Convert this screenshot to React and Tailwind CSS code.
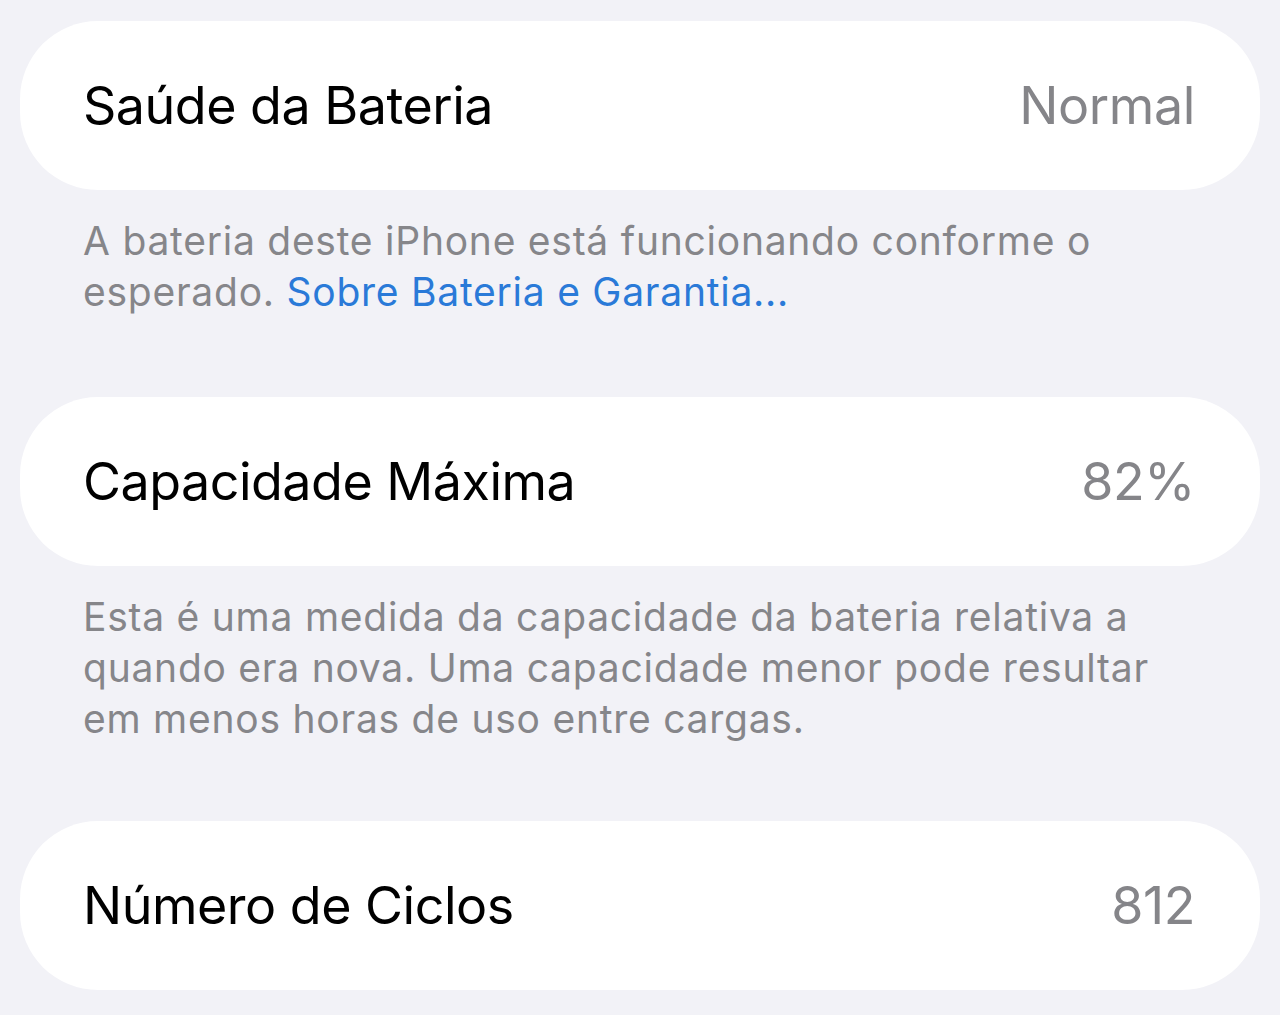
import React from 'react';

const rows = [
  {
    label: 'Saúde da Bateria',
    value: 'Normal',
    note: (
      <>
        A bateria deste iPhone está funcionando conforme o esperado.{' '}
        <span className="text-[#2a7ad8]">Sobre Bateria e Garantia...</span>
      </>
    ),
  },
  {
    label: 'Capacidade Máxima',
    value: '82%',
    note: 'Esta é uma medida da capacidade da bateria relativa a quando era nova. Uma capacidade menor pode resultar em menos horas de uso entre cargas.',
  },
  { label: 'Número de Ciclos', value: '812' },
];

const Row = ({ label, value }) => (
  <div className="flex h-[169px] items-center justify-between rounded-[78px] bg-white pl-[63px] pr-[65px]">
    <span className="text-[52px] tracking-[-0.5px] text-black">{label}</span>
    <span className="text-[52px] tracking-[-0.4px] text-[#858589]">{value}</span>
  </div>
);

export default function App() {
  return (
    <main
      className="min-h-screen bg-[#f2f2f7] px-[20px] pt-[21px]"
      style={{ fontFamily: 'Inter, "Noto Sans", sans-serif' }}
    >
      {rows.map((r, i) => (
        <section key={r.label} className={i === 1 ? 'mt-[80px]' : i === 2 ? 'mt-[77px]' : ''}>
          <Row label={r.label} value={r.value} />
          {r.note && (
            <p className="mt-[25px] max-w-[1160px] pl-[63px] text-[39px] leading-[51px] tracking-[0.75px] text-[#86868a]">
              {r.note}
            </p>
          )}
        </section>
      ))}
    </main>
  );
}
